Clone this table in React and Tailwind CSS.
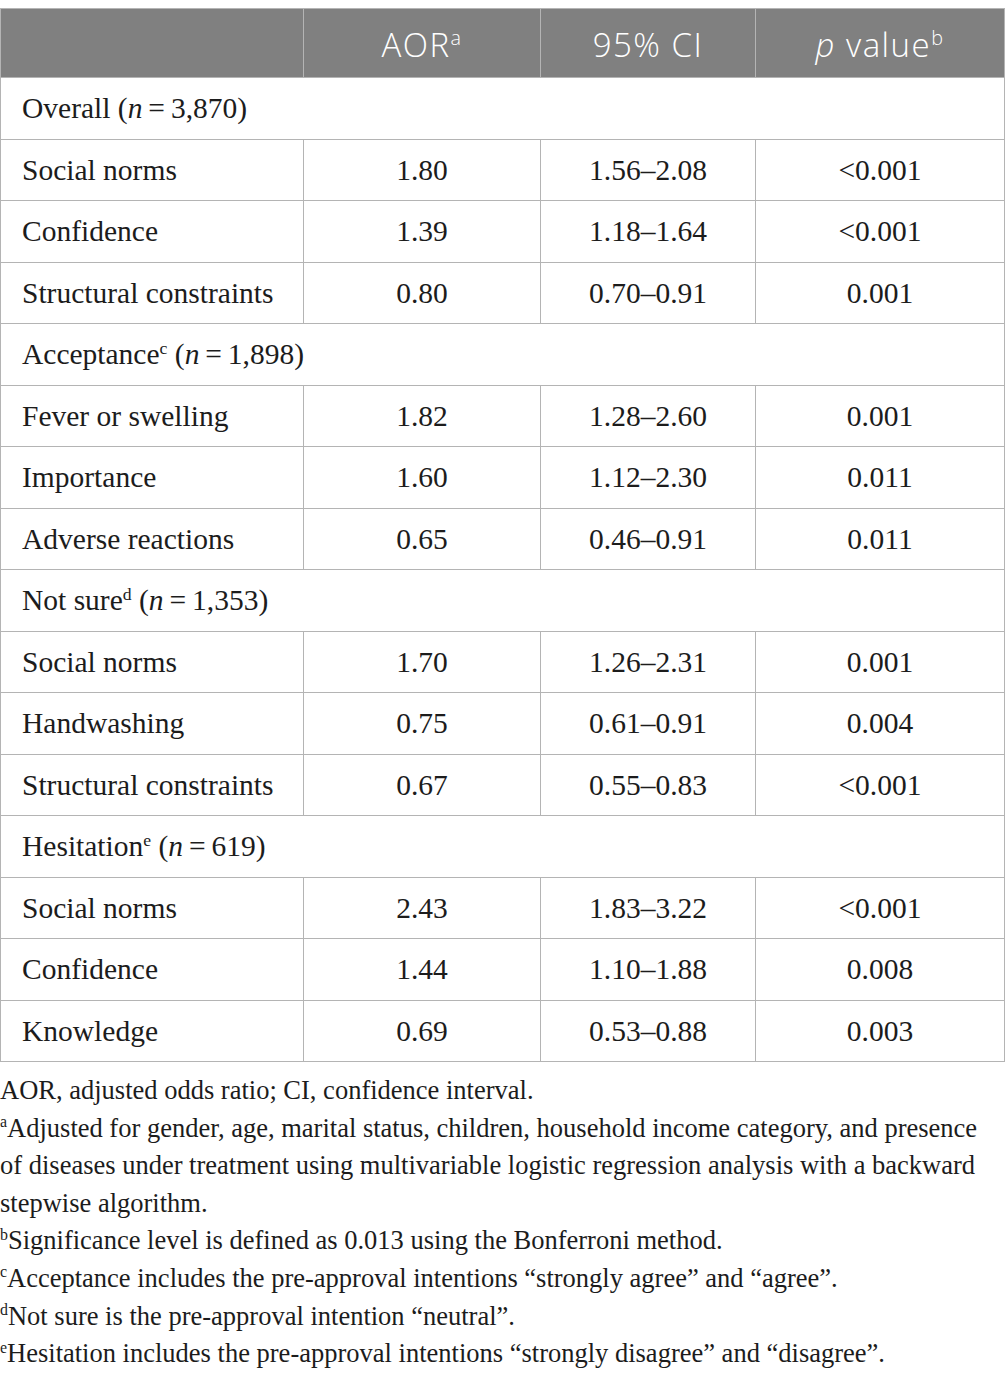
import React from 'react'

const groups = [
    {
        label: 'Overall', sup: null, n: '3,870',
        rows: [
            ['Social norms', '1.80', '1.56–2.08', '<0.001'],
            ['Confidence', '1.39', '1.18–1.64', '<0.001'],
            ['Structural constraints', '0.80', '0.70–0.91', '0.001'],
        ],
    },
    {
        label: 'Acceptance', sup: 'c', n: '1,898',
        rows: [
            ['Fever or swelling', '1.82', '1.28–2.60', '0.001'],
            ['Importance', '1.60', '1.12–2.30', '0.011'],
            ['Adverse reactions', '0.65', '0.46–0.91', '0.011'],
        ],
    },
    {
        label: 'Not sure', sup: 'd', n: '1,353',
        rows: [
            ['Social norms', '1.70', '1.26–2.31', '0.001'],
            ['Handwashing', '0.75', '0.61–0.91', '0.004'],
            ['Structural constraints', '0.67', '0.55–0.83', '<0.001'],
        ],
    },
    {
        label: 'Hesitation', sup: 'e', n: '619',
        rows: [
            ['Social norms', '2.43', '1.83–3.22', '<0.001'],
            ['Confidence', '1.44', '1.10–1.88', '0.008'],
            ['Knowledge', '0.69', '0.53–0.88', '0.003'],
        ],
    },
]

const serif = "font-['Liberation_Serif',serif]"

function Sup({ children }) {
    return <sup className="text-[0.6em] relative -top-[0.6em] align-baseline leading-none">{children}</sup>
}

function App() {
    return (
        <div className={`bg-white w-[1005px] min-h-[1378px] pt-2 text-[#1c1c1c] ${serif}`}>
            <table className="w-[1004px] border-collapse table-fixed">
                <colgroup>
                    <col className="w-[303px]" />
                    <col className="w-[237px]" />
                    <col className="w-[215px]" />
                    <col className="w-[249px]" />
                </colgroup>
                <thead>
                    <tr className="h-[69px] bg-[#808080] text-white font-['Open_Sans',sans-serif] text-[33px] tracking-[1.5px]">
                        <th className="border border-[#b4b4b4]"></th>
                        <th className="border border-[#b4b4b4] font-light pt-[3px]">AOR<Sup>a</Sup></th>
                        <th className="border border-[#b4b4b4] font-light pt-[3px]">95% CI</th>
                        <th className="border border-[#b4b4b4] font-light pt-[3px]"><i>p</i> value<Sup>b</Sup></th>
                    </tr>
                </thead>
                <tbody className="text-[29.5px]">
                    {groups.map((g) => (
                        <React.Fragment key={g.label}>
                            <tr className="h-[61.5px]">
                                <td colSpan={4} className="border border-[#b4b4b4] pl-[21px]">
                                    {g.label}{g.sup && <Sup>{g.sup}</Sup>} (<i>n</i>{'\u2009=\u2009'}{g.n})
                                </td>
                            </tr>
                            {g.rows.map((r, i) => (
                                <tr key={i} className="h-[61.5px]">
                                    <td className="border border-[#b4b4b4] pl-[21px]">{r[0]}</td>
                                    <td className="border border-[#b4b4b4] text-center">{r[1]}</td>
                                    <td className="border border-[#b4b4b4] text-center">{r[2]}</td>
                                    <td className="border border-[#b4b4b4] text-center">{r[3]}</td>
                                </tr>
                            ))}
                        </React.Fragment>
                    ))}
                </tbody>
            </table>
            <div className="text-[26.5px] leading-[37.6px] mt-[10px] pr-2">
                <p>AOR, adjusted odds ratio; CI, confidence interval.</p>
                <p><Sup>a</Sup>Adjusted for gender, age, marital status, children, household income category, and presence of diseases under treatment using multivariable logistic regression analysis with a backward stepwise algorithm.</p>
                <p><Sup>b</Sup>Significance level is defined as 0.013 using the Bonferroni method.</p>
                <p><Sup>c</Sup>Acceptance includes the pre-approval intentions “strongly agree” and “agree”.</p>
                <p><Sup>d</Sup>Not sure is the pre-approval intention “neutral”.</p>
                <p><Sup>e</Sup>Hesitation includes the pre-approval intentions “strongly disagree” and “disagree”.</p>
            </div>
        </div>
    )
}

export default App
